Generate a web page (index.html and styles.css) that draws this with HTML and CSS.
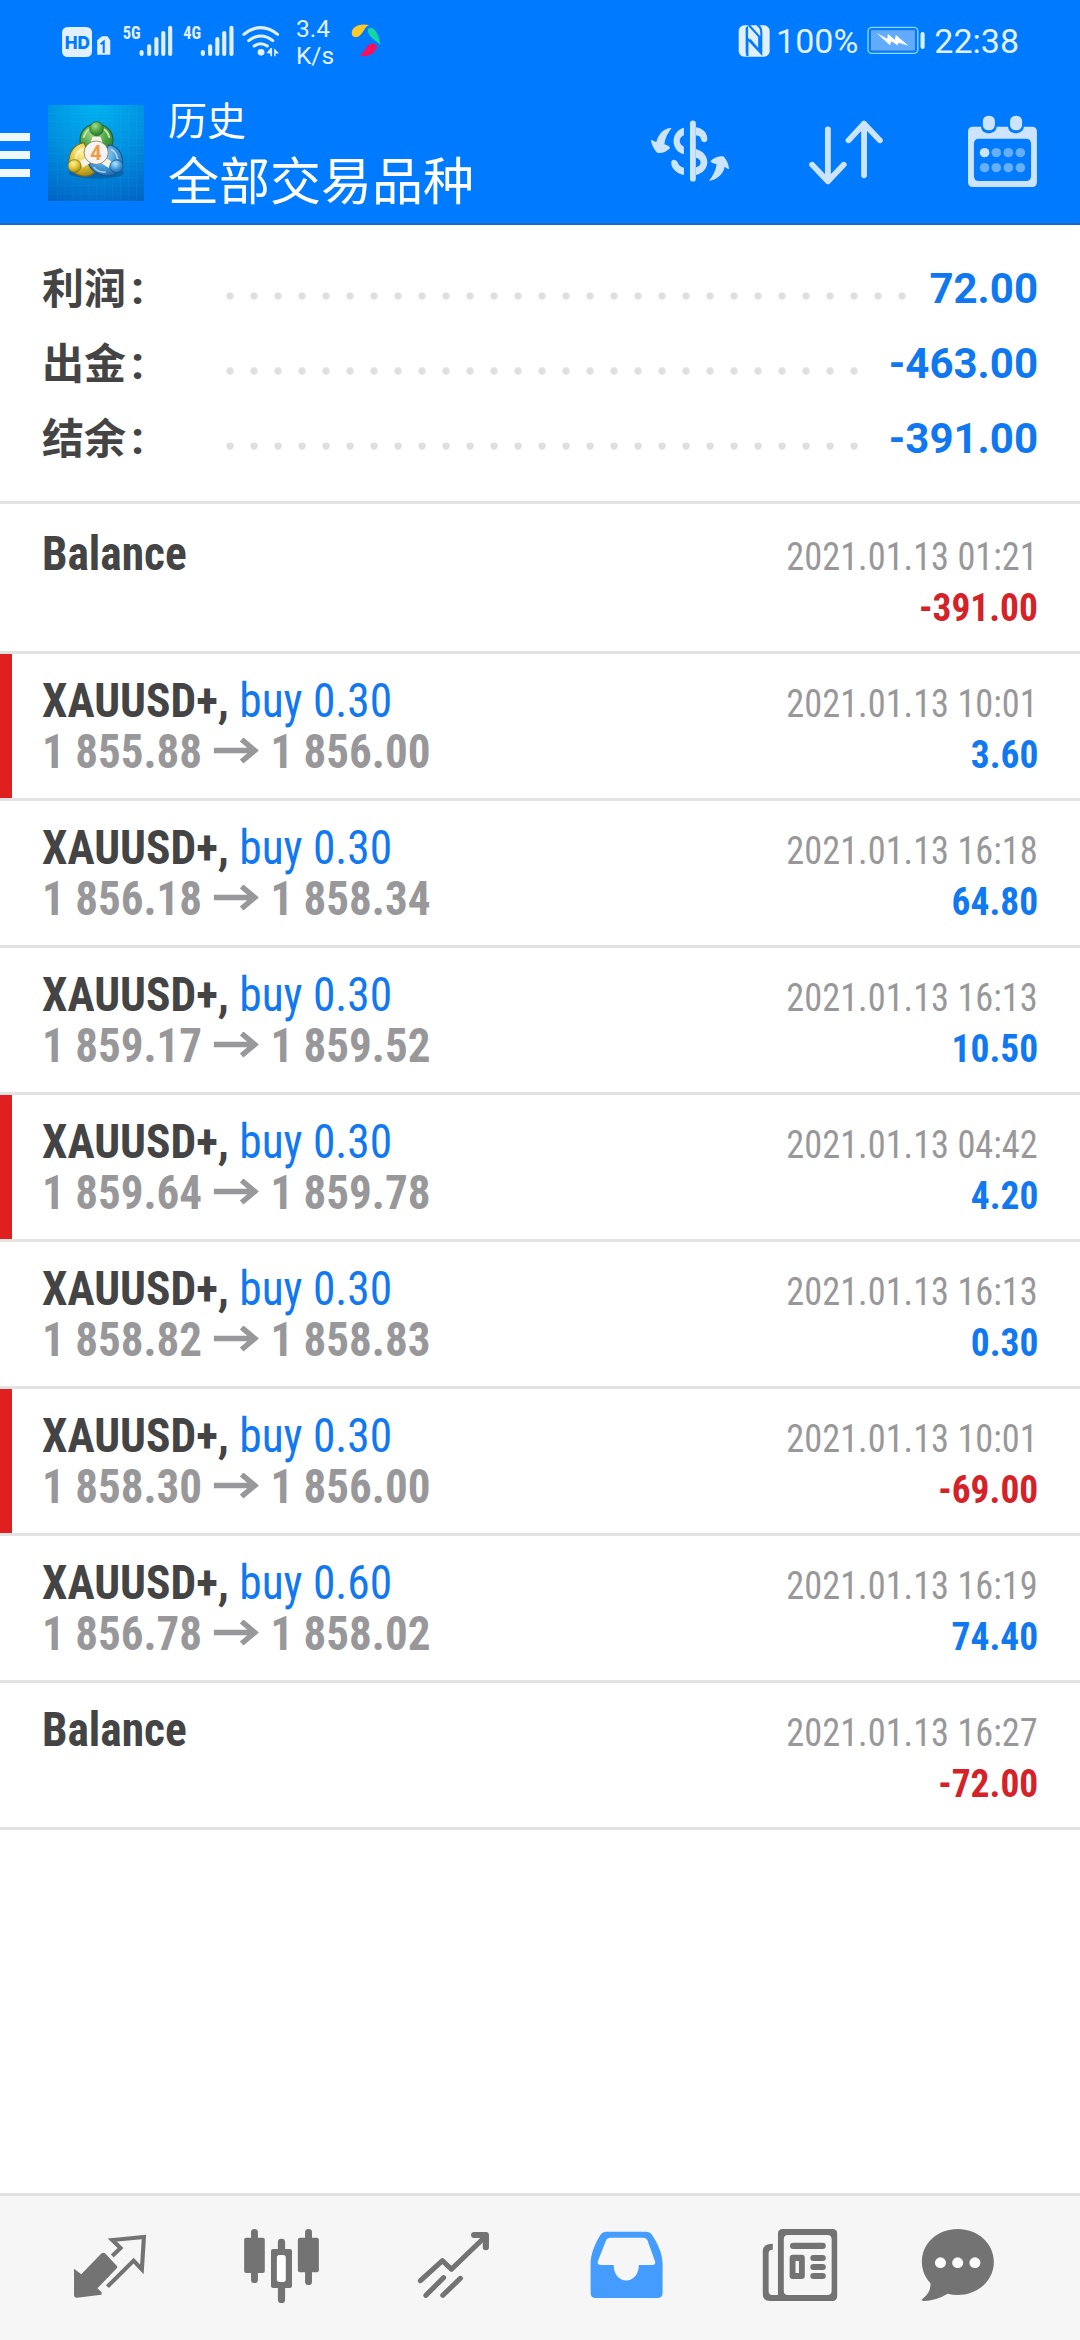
FILE: index.html
```html
<!DOCTYPE html>
<html lang="zh-CN">
<head>
<meta charset="utf-8">
<title>历史</title>
<link rel="stylesheet" href="styles.css">
</head>
<body>
<div class="screen">
  <header class="header">
    <div class="status">
      <svg class="st-signal" viewBox="174 48 639 144" preserveAspectRatio="none">
        <rect x="180" y="78" width="87" height="90" rx="16" fill="#e2efff"/>
        <text class="st-hd" x="188" y="144" textLength="73" lengthAdjust="spacingAndGlyphs">HD</text>
        <path d="M282 118l14-12h16l8 12v43h-38z" fill="#e2efff"/>
        <path d="M292 130l9-8v34" fill="none" stroke="#007aff" stroke-width="6"/>
        <text class="st-net" x="356" y="115" textLength="52" lengthAdjust="spacingAndGlyphs">5G</text>
        <text class="st-net" x="532" y="115" textLength="52" lengthAdjust="spacingAndGlyphs">4G</text>
        <g stroke="#e2efff" stroke-width="12" stroke-linecap="round">
          <path d="M411 153v6M433 136v23M454 114v45M474 96v63M494 80v79"/>
          <path d="M589 153v6M610 136v23M631 114v45M651 96v63M672 80v79"/>
        </g>
        <g fill="none" stroke="#e2efff" stroke-width="9" stroke-linecap="round">
          <path d="M708 100q49-40 98 0M722 119q35-28 70 0M738 135q19-14 38 0"/>
        </g>
        <circle cx="758" cy="154" r="10" fill="#e2efff"/>
        <path d="M774 156l12-15h4v25h-5v-8zM796 142l14 15-10 1v8h-4z" fill="#e2efff"/>
      </svg>
      <div class="st-speed"><span>3.4</span><span>K/s</span></div>
      <svg class="st-ring" viewBox="1018 72 88 104" preserveAspectRatio="none">
        <path d="M1020 102C1020 82 1046 72 1071 78C1056 84 1054 105 1039 113C1026 117 1020 111 1020 102z" fill="#ffc928"/>
        <path d="M1067 92C1073 79 1098 86 1104 137C1092 124 1067 113 1067 92z" fill="#13d6a2"/>
        <path d="M1043 168C1060 160 1062 136 1078 134C1096 132 1098 147 1086 158C1074 170 1057 174 1043 168z" fill="#f8105c"/>
      </svg>
      <div class="st-right">
        <svg class="st-nfc" viewBox="578 72 92 96" preserveAspectRatio="none">
          <rect x="580" y="73" width="89" height="94" rx="16" fill="#e2efff"/>
          <path d="M605 165V113l40 44V95c0-12-5-20-12-23M609 72l30 35v42l-27-33" fill="none" stroke="#007aff" stroke-width="6"/>
          <path d="M600 80l7-6v92c-6-3-7-8-7-14z" fill="#007aff"/>
        </svg>
        <span class="st-pct">100%</span>
        <svg class="st-batt" viewBox="949 78 169 87" preserveAspectRatio="none">
          <rect x="952" y="82" width="145" height="78" rx="11" fill="#007aff" stroke="#80dcff" stroke-width="4"/>
          <rect x="959" y="89" width="131" height="64" rx="4" fill="#62abff" stroke="#1474e8" stroke-width="3"/>
          <path d="M977 99l31 17 2-14 20 17 3-14 37 32-29-9-3 8-18-12-4 12z" fill="#fff"/>
          <rect x="1105" y="96" width="12" height="51" rx="6" fill="#d8f3ff"/>
        </svg>
        <span class="st-time">22:38</span>
      </div>
    </div>
    <div class="appbar">
      <div class="menu"><i></i><i></i><i></i></div>
      <svg class="logo" viewBox="139 315 279 288" preserveAspectRatio="none">
        <defs>
          <radialGradient id="sky" cx=".5" cy="0" r="1.1"><stop offset="0" stop-color="#00b2f0"/><stop offset=".5" stop-color="#0090e0"/><stop offset="1" stop-color="#0064c4"/></radialGradient>
          <radialGradient id="gr" cx=".4" cy=".3" r=".8"><stop offset="0" stop-color="#a8dc8a"/><stop offset=".5" stop-color="#4fa548"/><stop offset="1" stop-color="#226e2b"/></radialGradient>
          <radialGradient id="ye" cx=".4" cy=".3" r=".8"><stop offset="0" stop-color="#fff3a0"/><stop offset=".5" stop-color="#dfc332"/><stop offset="1" stop-color="#967a13"/></radialGradient>
          <radialGradient id="bl" cx=".4" cy=".3" r=".8"><stop offset="0" stop-color="#b9e6ff"/><stop offset=".5" stop-color="#469edb"/><stop offset="1" stop-color="#175e9f"/></radialGradient>
        </defs>
        <rect x="139" y="315" width="279" height="288" fill="url(#sky)"/>
        <path d="M166 315v288M189 315v288M212 315v288M235 315v288M258 315v288M281 315v288M304 315v288M327 315v288M350 315v288M373 315v288M396 315v288M139 341h279M139 365h279M139 389h279M139 413h279M139 437h279M139 461h279M139 485h279M139 509h279M139 533h279M139 557h279M139 581h279" stroke="#5dc4f5" stroke-opacity=".13" stroke-width="2"/>
        <ellipse cx="280" cy="519" rx="80" ry="17" fill="#063d74" opacity=".4"/>
        <circle cx="280" cy="420" r="48" fill="url(#gr)" stroke="#245f27" stroke-width="3"/>
        <path d="M242 413q8-27 28-29M318 413q-8-27-28-29" fill="none" stroke="#bfe6a6" stroke-width="6"/>
        <path d="M244 428C215 431 198 459 200 492C203 518 232 535 263 526L290 505L260 475z" fill="url(#ye)" stroke="#7c681a" stroke-width="3"/>
        <path d="M315 435C342 437 358 462 356 492C354 517 326 533 298 526C277 520 262 506 257 492L297 476z" fill="url(#bl)" stroke="#16558c" stroke-width="3"/>
        <path d="M219 477q4-25 24-31M342 477q-5-22-20-29M272 501q11 17 35 15" fill="none" stroke="#fff" stroke-opacity=".55" stroke-width="5"/>
        <path d="M268 410h24l6 20h-36zM232 483l20-12 10 18-23 14zM323 484l-19-12-10 18 22 14z" fill="#f4f4e6"/>
        <ellipse cx="280" cy="386" rx="20" ry="21" fill="url(#gr)" stroke="#245f27" stroke-width="2"/>
        <circle cx="216" cy="498" r="19" fill="url(#ye)" stroke="#7c681a" stroke-width="2"/>
        <circle cx="338" cy="499" r="19" fill="url(#bl)" stroke="#16558c" stroke-width="2"/>
        <circle cx="279" cy="458" r="35" fill="#f5f4f2" stroke="#765f42" stroke-width="2"/>
        <text class="logo-num" x="262" y="480">4</text>
      </svg>
      <div class="titles">
        <div class="title">历史</div>
        <div class="subtitle">全部交易品种</div>
      </div>
      <nav class="actions">
        <svg viewBox="209.1 243 453 432" preserveAspectRatio="none" fill="#cce4ff">
          <path d="M444 370v166" stroke="#cce4ff" stroke-width="17" stroke-linecap="round"/>
          <path d="M418 383v23c-16 5-16 28 0 34v23c-40-11-40-69 0-80zM453 382c19 3 33 16 33 34 0 15-18 13-19 0-1-6-6-9-14-10zM453 447c44 12 44 68 0 78v-23c18-5 18-24 0-29zM418 525c-23-4-37-22-37-36 0-14 16-12 20 1 2 6 8 11 17 13z"/>
          <path d="M382 384c-22-1-39 19-44 42-7-1-11-7-16-6 2 15 11 32 20 39 13 2 27-5 36-15-2-6-12-9-17-11 2-19 11-35 21-49zM490 543c25-3 43-23 46-42 6 1 8 7 13 6-1-14-8-30-17-38-13-2-29 5-37 15 3 6 12 6 18 9-3 21-12 37-23 50z"/>
        </svg>
        <svg viewBox="662.1 243 453 432" preserveAspectRatio="none" fill="none" stroke="#cce4ff" stroke-width="17" stroke-linecap="round" stroke-linejoin="round">
          <path d="M836 388v154M790 494l46 50 46-50M941 526V371M896 421l45-50 46 50"/>
        </svg>
        <svg viewBox="1115.1 243 453 432" preserveAspectRatio="none" fill="#cce4ff">
          <path fill-rule="evenodd" d="M1257 380h24c0 26 44 26 45 0h33c2 26 44 26 46 0h24q14 0 14 14v153q0 14-14 14h-172q-14 0-14-14V394q0-14 14-14zM1275 416q-15 0-15 16v95q0 16 15 16h136q15 0 15-16v-95q0-16-15-16z"/>
          <rect x="1286" y="347" width="35" height="44" rx="16"/><rect x="1365" y="347" width="35" height="44" rx="16"/>
          <circle cx="1291" cy="458" r="14"/>
          <g fill="#66afff"><circle cx="1325" cy="458" r="14"/><circle cx="1360" cy="458" r="14"/><circle cx="1395" cy="458" r="14"/><circle cx="1291" cy="503" r="14"/><circle cx="1325" cy="503" r="14"/><circle cx="1360" cy="503" r="14"/><circle cx="1395" cy="503" r="14"/></g>
        </svg>
      </nav>
    </div>
  </header>

  <section class="summary">
    <div class="sum-row"><span class="sum-label">利润<span class="colon">:</span></span><span class="leader"><i></i></span><span class="sum-value">72.00</span></div>
    <div class="sum-row"><span class="sum-label">出金<span class="colon">:</span></span><span class="leader"><i></i></span><span class="sum-value">-463.00</span></div>
    <div class="sum-row"><span class="sum-label">结余<span class="colon">:</span></span><span class="leader"><i></i></span><span class="sum-value">-391.00</span></div>
  </section>

  <main class="list">
    <div class="row"><div class="line"><b class="sym">Balance</b><span class="date">2021.01.13 01:21</span></div><div class="line"><b class="amt loss">-391.00</b></div></div>
    <div class="row flagged"><div class="line"><span class="sym"><b>XAUUSD+,</b> <span class="side">buy 0.30</span></span><span class="date">2021.01.13 10:01</span></div><div class="line"><b class="price">1 855.88<svg class="arrow" viewBox="0 0 46 26" preserveAspectRatio="none"><path d="M0 12.5h42M28 1.500l13 11-13 11"/></svg>1 856.00</b><b class="amt">3.60</b></div></div>
    <div class="row"><div class="line"><span class="sym"><b>XAUUSD+,</b> <span class="side">buy 0.30</span></span><span class="date">2021.01.13 16:18</span></div><div class="line"><b class="price">1 856.18<svg class="arrow" viewBox="0 0 46 26" preserveAspectRatio="none"><path d="M0 12.5h42M28 1.500l13 11-13 11"/></svg>1 858.34</b><b class="amt">64.80</b></div></div>
    <div class="row"><div class="line"><span class="sym"><b>XAUUSD+,</b> <span class="side">buy 0.30</span></span><span class="date">2021.01.13 16:13</span></div><div class="line"><b class="price">1 859.17<svg class="arrow" viewBox="0 0 46 26" preserveAspectRatio="none"><path d="M0 12.5h42M28 1.500l13 11-13 11"/></svg>1 859.52</b><b class="amt">10.50</b></div></div>
    <div class="row flagged"><div class="line"><span class="sym"><b>XAUUSD+,</b> <span class="side">buy 0.30</span></span><span class="date">2021.01.13 04:42</span></div><div class="line"><b class="price">1 859.64<svg class="arrow" viewBox="0 0 46 26" preserveAspectRatio="none"><path d="M0 12.5h42M28 1.500l13 11-13 11"/></svg>1 859.78</b><b class="amt">4.20</b></div></div>
    <div class="row"><div class="line"><span class="sym"><b>XAUUSD+,</b> <span class="side">buy 0.30</span></span><span class="date">2021.01.13 16:13</span></div><div class="line"><b class="price">1 858.82<svg class="arrow" viewBox="0 0 46 26" preserveAspectRatio="none"><path d="M0 12.5h42M28 1.500l13 11-13 11"/></svg>1 858.83</b><b class="amt">0.30</b></div></div>
    <div class="row flagged"><div class="line"><span class="sym"><b>XAUUSD+,</b> <span class="side">buy 0.30</span></span><span class="date">2021.01.13 10:01</span></div><div class="line"><b class="price">1 858.30<svg class="arrow" viewBox="0 0 46 26" preserveAspectRatio="none"><path d="M0 12.5h42M28 1.500l13 11-13 11"/></svg>1 856.00</b><b class="amt loss">-69.00</b></div></div>
    <div class="row"><div class="line"><span class="sym"><b>XAUUSD+,</b> <span class="side">buy 0.60</span></span><span class="date">2021.01.13 16:19</span></div><div class="line"><b class="price">1 856.78<svg class="arrow" viewBox="0 0 46 26" preserveAspectRatio="none"><path d="M0 12.5h42M28 1.500l13 11-13 11"/></svg>1 858.02</b><b class="amt">74.40</b></div></div>
    <div class="row"><div class="line"><b class="sym">Balance</b><span class="date">2021.01.13 16:27</span></div><div class="line"><b class="amt loss">-72.00</b></div></div>
  </main>

  <nav class="tabs">
    <svg viewBox="69.7 48 499.5 432" preserveAspectRatio="none" fill="#737373">
      <path d="M215 266l21 17 59-63q5-4 10 0l34 37q3 4 0 8l-56 60 12 12v7l-72 9q-8 0-8-8z"/>
      <path d="M326 228l24-24-24-24 92-9-6 97-24-26-76 78" fill="none" stroke="#737373" stroke-width="12"/>
    </svg>
    <svg viewBox="569.2 48 499.5 432" preserveAspectRatio="none" fill="#737373">
      <rect x="709" y="173" width="60" height="106" rx="6"/><rect x="865" y="173" width="61" height="104" rx="6"/>
      <rect x="729" y="147" width="20" height="162" rx="10"/><rect x="886" y="147" width="20" height="168" rx="10"/>
      <rect x="807" y="176" width="21" height="193" rx="10"/><rect x="787" y="207" width="61" height="117" rx="6"/>
      <rect x="804" y="225" width="26" height="81" rx="8" fill="#fff"/>
    </svg>
    <svg viewBox="1068.700 48 499.5 432" preserveAspectRatio="none" fill="none" stroke="#737373" stroke-width="15" stroke-linecap="round" stroke-linejoin="round">
      <path d="M1221 302l64-60 26 26 98-98M1237 346l51-53M1286 346l51-51"/>
      <path d="M1377 165h34v37" stroke-width="18"/>
    </svg>
    <svg viewBox="0 48 499.5 432" preserveAspectRatio="none">
      <path fill="#459cff" fill-rule="evenodd" d="M190 155h120q9 0 14 8c19 28 32 62 32 87v89q0 15-15 15H162q-15 0-15-15v-89c0-25 12-60 30-87q5-8 13-8zM205 173q-10 0-13 8l-24 63q-2 11 9 11h37c0 62 73 62 73 0h39q11 0 8-11l-22-63q-3-8-13-8z"/>
    </svg>
    <svg viewBox="499.5 48 499.5 432" preserveAspectRatio="none" fill="#737373">
      <path fill-rule="evenodd" d="M705 147h144q14 0 14 14v187q0 15-14 15H667q-20 0-20-21V213q0-22 29-22v18q-12 0-12 10v115q0 11 11 11h16V161q0-14 14-14zM720 165q-12 0-12 13v154q0 13 12 13h114q13 0 13-13V178q0-13-13-13z"/>
      <rect x="726" y="188" width="104" height="19" rx="9"/>
      <path fill-rule="evenodd" d="M734 224h26q9 0 9 9v55q0 9-9 9h-26q-9 0-9-9v-55q0-9 9-9zM742 243v36h10v-36z"/>
      <rect x="785" y="225" width="45" height="18" rx="9"/><rect x="785" y="252" width="45" height="18" rx="9"/><rect x="785" y="279" width="45" height="18" rx="9"/>
    </svg>
    <svg viewBox="999 48 499.5 432" preserveAspectRatio="none" fill="#737373">
      <path d="M1213 147c58 0 105 42 105 99s-48 99-105 99q-16 0-29-4-34 21-70 22-8-1-3-7 24-17 23-46c-16-18-25-40-25-64 0-57 46-99 104-99z"/>
      <g fill="#fff"><circle cx="1163" cy="248" r="16"/><circle cx="1213" cy="248" r="16"/><circle cx="1263" cy="248" r="16"/></g>
    </svg>
  </nav>
</div>
</body>
</html>
```
FILE: styles.css
```css
* { box-sizing: border-box; }
body { margin: 0; background: #fff; font-family: Roboto, "Noto Sans CJK SC", sans-serif; }
svg { display: block; flex: none; }

.screen { width: 1080px; height: 2340px; display: flex; flex-direction: column; overflow: hidden; background: #fff; }

/* Header */
.header { flex: none; height: 225px; background: #007aff; border-bottom: 2px solid #1b68be; color: #fff; }
.status { height: 81px; display: flex; align-items: center; padding: 0 61px 0 60px; color: #e2f1ff; }
.st-signal { width: 220px; height: 48px; }
.st-hd { font: 800 54px Inter, sans-serif; fill: #007aff; }
.st-net { font: 700 55px Roboto, sans-serif; font-stretch: 75%; fill: #e2efff; }
.st-speed { display: flex; flex-direction: column; margin-left: 16px; width: 36px; font-size: 24.5px; line-height: 27px; padding-top: 2px; }
.st-ring { width: 30px; height: 35px; margin-left: 19px; }
.st-right { display: flex; align-items: center; margin-left: auto; font-size: 34px; line-height: 40px; }
.st-nfc { width: 32px; height: 32px; }
.st-pct { margin-left: 6px; }
.st-batt { width: 58px; height: 29px; margin: 0 9px 0 9px; }

.appbar { height: 144px; display: flex; }
.menu { width: 30px; margin-right: 18px; padding-top: 52px; display: flex; flex-direction: column; gap: 10px; }
.menu i { height: 8px; background: #f0f8ff; }
.logo { width: 96px; height: 96px; margin-top: 24px; }
.logo-num { font: 700 58px Roboto, sans-serif; fill: #f09a45; }
.titles { margin-left: 24px; padding-top: 14px; }
.title { font-size: 39px; line-height: 54px; }
.subtitle { font-size: 51px; line-height: 68px; }
.actions { display: flex; margin-left: auto; }
.actions svg { width: 156px; height: 144px; }

/* Totals */
.summary { flex: none; height: 279px; padding: 26px 42px 0 42px; border-bottom: 3px solid #e3e3e3; }
.sum-row { display: flex; align-items: center; height: 75px; font-size: 42px; font-weight: 700; line-height: 75px; color: #444; }
.sum-label { width: 176px; padding-top: 1px; white-space: nowrap; }
.colon { margin-left: 5px; font-size: 47px; line-height: 1; }
.leader { flex: 1; margin-right: 10px; padding-top: 14px; }
.leader i { display: block; width: round(down, 100%, 24px); height: 8px; background: radial-gradient(circle at center, #dfdfdf 3.2px, transparent 4.2px) 0 0 / 24px 8px; }
.sum-value { color: #0f78f0; }

/* Deals */
.list { flex: 1; padding-top: 3px; font-family: "Roboto Condensed", Roboto, sans-serif; font-stretch: 75%; }
.row { height: 147px; padding: 21px 42px 0 42px; border-bottom: 3px solid #e3e3e3; }
.flagged { background: linear-gradient(#e02020, #e02020) 0 0 / 12px 100% no-repeat; }
.line { height: 51px; display: flex; align-items: baseline; line-height: 51px; white-space: nowrap; }
.sym, .price { font-size: 48px; transform-origin: left; }
.sym { color: #444; transform: scaleX(.946); }
.side { color: #1078f0; }
.price { color: #98989a; transform: scaleX(.938); }
.arrow { display: inline-block; width: 49px; height: 26px; margin: 0 12px; fill: none; stroke: #98989a; stroke-width: 5.5px; vertical-align: 4px; }
.date, .amt { margin-left: auto; font-size: 39px; transform-origin: right; }
.date { color: #98989a; transform: scaleX(.932); }
.amt { color: #1078f0; transform: scaleX(.96); }
/* Keeps the amount on the price baseline in rows that have no price */
.amt::before { content: ""; display: inline-block; height: 42px; }
.loss { color: #d42228; }

/* Bottom tabs */
.tabs { flex: none; height: 147px; display: grid; grid-template-columns: repeat(6, 172px); padding: 0 24px; background: #f6f6f6; border-top: 3px solid #e0e0e0; }
.tabs svg { width: 172px; height: 144px; }
```
